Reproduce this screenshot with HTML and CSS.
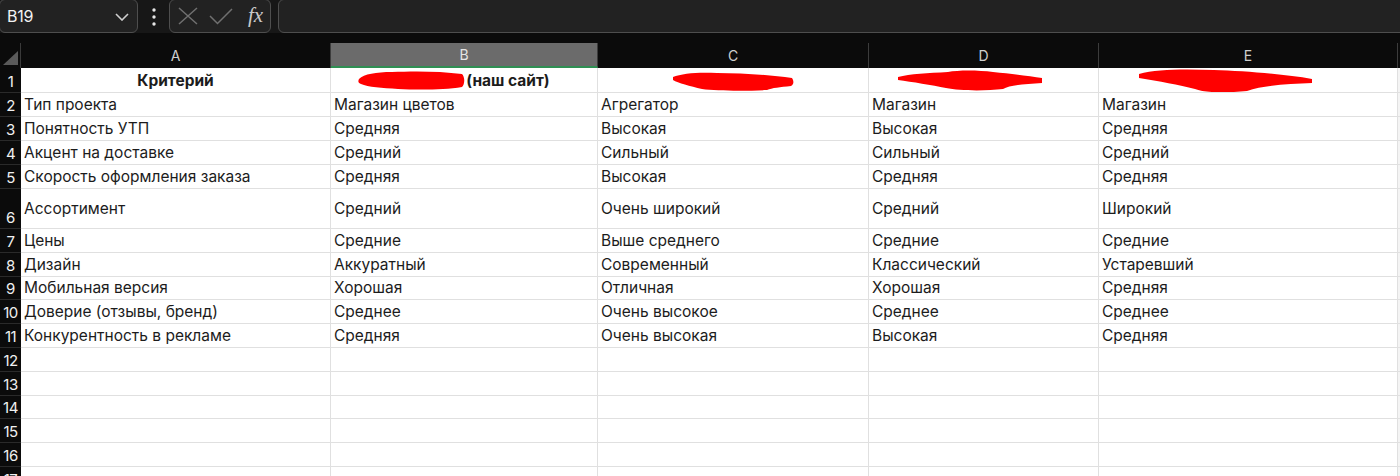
FILE: index.html
```html
<!DOCTYPE html>
<html lang="ru">
<head>
<meta charset="utf-8">
<title>Sheet</title>
<link rel="stylesheet" href="styles.css">
</head>
<body>
<div class="app">
  <div class="toolbar">
    <div class="namebox">
      <span class="ref">B19</span>
      <svg class="chev" width="14" height="8" viewBox="0 0 14 8"><path d="M1 1 L7 7 L13 1" fill="none" stroke="#cfcfcf" stroke-width="1.6"/></svg>
    </div>
    <div class="more">
      <svg width="4" height="18" viewBox="0 0 4 18"><circle cx="2" cy="2" r="1.7" fill="#e6e6e6"/><circle cx="2" cy="9" r="1.7" fill="#e6e6e6"/><circle cx="2" cy="16" r="1.7" fill="#e6e6e6"/></svg>
    </div>
    <div class="fxbtns">
      <svg class="ico-x" width="20" height="18" viewBox="0 0 20 18"><path d="M1 1 L19 17 M19 1 L1 17" stroke="#707070" stroke-width="1.5" fill="none"/></svg>
      <svg class="ico-ok" width="24" height="17" viewBox="0 0 24 17"><path d="M1 8 L8.5 15.5 L23 1" stroke="#707070" stroke-width="1.5" fill="none"/></svg>
      <span class="fx">fx</span>
    </div>
    <div class="formula"></div>
  </div>

  <div class="sheet">
    <!-- header row -->
    <div class="corner"><span class="tri"></span></div>
    <div class="colh">A</div>
    <div class="colh sel">B</div>
    <div class="colh">C</div>
    <div class="colh">D</div>
    <div class="colh">E</div>
    <div class="colh last"></div>

    <!-- row 1 -->
    <div class="rowh">1</div>
    <div class="c h">Критерий</div>
    <div class="c h hb"><svg class="blot" width="107" height="19" viewBox="0 0 107 19"><path d="M1 8 C6 3 18 1 34 1 C55 0 82 0 104 3 C107 6 107 13 104 16 C86 19 60 19 40 18 C24 17 10 16 3 13 C0 12 0 10 1 8 Z" fill="#ff0000"/></svg>(наш сайт)</div>
    <div class="c h hc"><svg class="blot" width="122" height="19" viewBox="0 0 122 19"><path d="M1 5 C10 1 28 0 45 1 C70 1 98 3 120 6 C122 9 122 12 119 14 C108 15 100 16 95 18 C75 19 45 19 30 17 C18 14 6 11 1 8 Z" fill="#ff0000"/></svg></div>
    <div class="c h hd"><svg class="blot" width="145" height="21" viewBox="0 0 145 21"><path d="M0 7 C12 4 30 3 50 2 C60 0 80 0 95 2 C115 4 132 6 144 8 L144 13 C128 14 112 15 105 19 C88 21 62 21 48 18 C34 15 14 12 0 10 Z" fill="#ff0000"/></svg></div>
    <div class="c h he"><svg class="blot" width="174" height="24" viewBox="0 0 174 24"><path d="M0 5 C18 0 45 0 75 1 C105 2 145 5 173 10 L173 14 C150 15 125 16 108 22 C88 24 66 24 56 20 C40 16 20 12 0 9 Z" fill="#ff0000"/></svg></div>
    <div class="c last"></div>

    <div class="rowh">2</div>
    <div class="c">Тип проекта</div><div class="c">Магазин цветов</div><div class="c">Агрегатор</div><div class="c">Магазин</div><div class="c">Магазин</div><div class="c last"></div>

    <div class="rowh">3</div>
    <div class="c">Понятность УТП</div><div class="c">Средняя</div><div class="c">Высокая</div><div class="c">Высокая</div><div class="c">Средняя</div><div class="c last"></div>

    <div class="rowh">4</div>
    <div class="c">Акцент на доставке</div><div class="c">Средний</div><div class="c">Сильный</div><div class="c">Сильный</div><div class="c">Средний</div><div class="c last"></div>

    <div class="rowh">5</div>
    <div class="c">Скорость оформления заказа</div><div class="c">Средняя</div><div class="c">Высокая</div><div class="c">Средняя</div><div class="c">Средняя</div><div class="c last"></div>

    <div class="rowh">6</div>
    <div class="c">Ассортимент</div><div class="c">Средний</div><div class="c">Очень широкий</div><div class="c">Средний</div><div class="c">Широкий</div><div class="c last"></div>

    <div class="rowh">7</div>
    <div class="c">Цены</div><div class="c">Средние</div><div class="c">Выше среднего</div><div class="c">Средние</div><div class="c">Средние</div><div class="c last"></div>

    <div class="rowh">8</div>
    <div class="c">Дизайн</div><div class="c">Аккуратный</div><div class="c">Современный</div><div class="c">Классический</div><div class="c">Устаревший</div><div class="c last"></div>

    <div class="rowh">9</div>
    <div class="c">Мобильная версия</div><div class="c">Хорошая</div><div class="c">Отличная</div><div class="c">Хорошая</div><div class="c">Средняя</div><div class="c last"></div>

    <div class="rowh">10</div>
    <div class="c">Доверие (отзывы, бренд)</div><div class="c">Среднее</div><div class="c">Очень высокое</div><div class="c">Среднее</div><div class="c">Среднее</div><div class="c last"></div>

    <div class="rowh">11</div>
    <div class="c">Конкурентность в рекламе</div><div class="c">Средняя</div><div class="c">Очень высокая</div><div class="c">Высокая</div><div class="c">Средняя</div><div class="c last"></div>

    <div class="rowh">12</div>
    <div class="c"></div><div class="c"></div><div class="c"></div><div class="c"></div><div class="c"></div><div class="c last"></div>

    <div class="rowh">13</div>
    <div class="c"></div><div class="c"></div><div class="c"></div><div class="c"></div><div class="c"></div><div class="c last"></div>

    <div class="rowh">14</div>
    <div class="c"></div><div class="c"></div><div class="c"></div><div class="c"></div><div class="c"></div><div class="c last"></div>

    <div class="rowh">15</div>
    <div class="c"></div><div class="c"></div><div class="c"></div><div class="c"></div><div class="c"></div><div class="c last"></div>

    <div class="rowh">16</div>
    <div class="c"></div><div class="c"></div><div class="c"></div><div class="c"></div><div class="c"></div><div class="c last"></div>

    <div class="rowh">17</div>
    <div class="c"></div><div class="c"></div><div class="c"></div><div class="c"></div><div class="c"></div><div class="c last"></div>
  </div>
</div>
</body>
</html>
```

FILE: styles.css
```css
* { box-sizing: border-box; }

html, body {
  margin: 0;
  padding: 0;
  background: #0b0b0b;
  overflow: hidden;
  width: 1400px;
  height: 476px;
}

.app {
  font-family: "Inter", "Liberation Sans", sans-serif;
}

/* ---------- toolbar ---------- */
.toolbar {
  display: flex;
  align-items: flex-start;
  height: 33px;
  background: #171717;
}

.namebox,
.fxbtns,
.formula {
  height: 34px;
  margin-top: -1px;
  border: 1px solid #4e4e4e;
  border-radius: 6px;
  background: #222222;
  display: flex;
  align-items: center;
}

.namebox {
  width: 139px;
  margin-left: -1px;
  padding: 0 8px 0 7px;
  justify-content: space-between;
}

.ref {
  color: #f2f2f2;
  font-size: 16px;
  letter-spacing: -0.2px;
}

.chev { margin-top: 2px; }

.more {
  width: 31px;
  height: 33px;
  display: flex;
  align-items: center;
  justify-content: center;
}

.fxbtns {
  width: 102px;
  padding: 0 0 0 8px;
  gap: 11px;
}

.fx {
  font-family: "Liberation Serif", "DejaVu Serif", serif;
  font-style: italic;
  font-size: 21px;
  color: #c9c9c9;
  margin-left: 4px;
  margin-top: -1px;
}

.formula {
  flex: 1;
  margin-left: 7px;
  margin-right: -10px;
}

/* ---------- sheet ---------- */
.sheet {
  margin-top: 10px;
  display: grid;
  grid-template-columns: 21px 310px 267px 271px 230px 299px 1fr;
  grid-template-rows: 25px 25px 24px 24px 24px 24px 40px;
  grid-auto-rows: 23.8px;
  font-size: 15.5px;
  color: #1c1c1c;
}

.corner {
  background: #0b0b0b;
  border-right: 1px solid #3a3a3a;
  position: relative;
}

.tri {
  position: absolute;
  right: 2px;
  bottom: 3px;
  width: 15px;
  height: 14px;
  background: #5a5a5a;
  clip-path: polygon(100% 0, 100% 100%, 0 100%);
}

.colh {
  background: #0b0b0b;
  color: #cfcfcf;
  font-size: 14px;
  display: flex;
  align-items: center;
  justify-content: center;
  border-right: 1px solid #3c3c3c;
}

.colh.sel {
  background: #6b6b6b;
  color: #e4e4e4;
  border-bottom: 2px solid #2f8f53;
}

.colh.last { border-right: none; }

.rowh {
  background: #0b0b0b;
  color: #f0f0f0;
  font-size: 15px;
  display: flex;
  align-items: flex-end;
  justify-content: center;
  padding-bottom: 1px;
  border-bottom: 1px solid #2a2a2a;
  overflow: hidden;
  white-space: nowrap;
  letter-spacing: -0.5px;
}

.c {
  background: #ffffff;
  border-right: 1px solid #e0e0e0;
  border-bottom: 1px solid #e0e0e0;
  display: flex;
  align-items: center;
  padding-left: 3px;
  white-space: nowrap;
  overflow: hidden;
}

.c.last { border-right: none; background: #f4f4f4; }

.c.h {
  font-weight: 700;
  justify-content: center;
  padding-left: 0;
}

.blot { flex: none; display: block; }

.hb { padding-right: 20px; }
.hb .blot { margin-right: 1px; margin-top: 1px; }
.hc { padding-left: 0; }
.hc .blot { margin-top: 3px; }
.hd { padding-right: 26px; }
.hd .blot { margin-top: 1px; }
.he { padding-right: 45px; }
.he .blot { margin-top: 1px; }
```
